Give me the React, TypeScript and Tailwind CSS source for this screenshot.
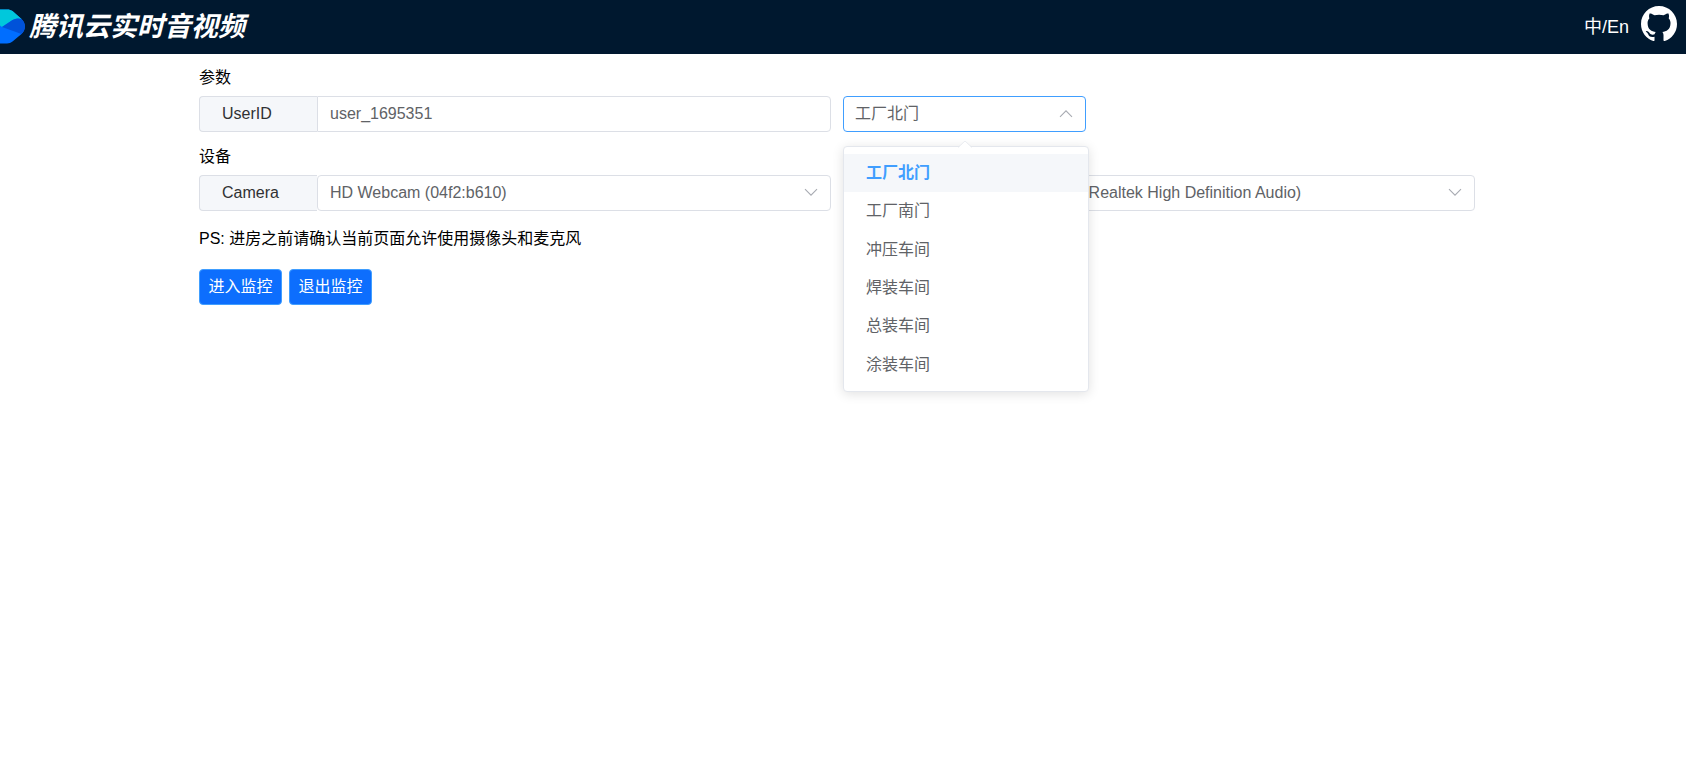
import { useState } from 'react';
import type { ReactNode } from 'react';

const ROOMS = ['工厂北门', '工厂南门', '冲压车间', '焊装车间', '总装车间', '涂装车间'];

function Chevron({ up = false }: { up?: boolean }) {
  return (
    <svg
      viewBox="0 0 14 14"
      className={`pointer-events-none absolute right-[13px] h-[14px] w-[14px] ${up ? 'top-[11px] rotate-180' : 'top-[10px]'}`}
      fill="none"
      stroke="#a8abb2"
      strokeWidth="1.1"
      aria-hidden="true"
    >
      <path d="M1 4.2 7 10.2l6-6" />
    </svg>
  );
}

function Logo() {
  return (
    <svg viewBox="0 0 25 36" className="h-9 w-[25px]" aria-hidden="true">
      <path d="M0 .5h7c2.500 0 4 .6 5.500 1.600l9 7.900c4.500 4 4.500 11 0 15l-9 7.500c-1.500 1.200-3.500 1.900-5.500 1.900H0z" fill="#006eff" />
      <path d="M0 .5h7c2.500 0 4 .6 5.500 1.600L21.500 10C18 8.800 14 9.500 11 12l-9 6-2-1.500z" fill="#00c8dc" />
      <path d="M2 18l9-6c3-2.500 7-3.200 10.500-2 4.500 4 4.500 11 0 15z" fill="#0052d9" />
    </svg>
  );
}

function GithubMark() {
  return (
    <svg viewBox="0 0 16 16" className="h-9 w-9" fill="currentColor" aria-hidden="true">
      <path d="M8 0C3.58 0 0 3.58 0 8c0 3.54 2.29 6.53 5.47 7.59.4.07.55-.17.55-.38 0-.19-.01-.82-.01-1.49-2.01.37-2.53-.49-2.69-.94-.09-.23-.48-.94-.82-1.13-.28-.15-.68-.52-.01-.53.63-.01 1.08.58 1.23.82.72 1.21 1.87.87 2.33.66.07-.52.28-.87.51-1.07-1.78-.2-3.64-.89-3.64-3.95 0-.87.31-1.59.82-2.15-.08-.2-.36-1.02.08-2.12 0 0 .67-.21 2.2.82.64-.18 1.32-.27 2-.27s1.36.09 2 .27c1.53-1.04 2.2-.82 2.2-.82.44 1.1.16 1.92.08 2.12.51.56.82 1.27.82 2.15 0 3.07-1.87 3.75-3.65 3.95.29.25.54.73.54 1.48 0 1.07-.01 1.93-.01 2.2 0 .21.15.46.55.38A8.01 8.01 0 0 0 16 8c0-4.42-3.58-8-8-8z" />
    </svg>
  );
}

type DeviceSelectProps = {
  id: string;
  label: string;
  options: string[];
};

function DeviceSelect({ id, label, options }: DeviceSelectProps) {
  return (
    <div className="flex h-9">
      <label
        htmlFor={id}
        className="flex min-w-[118px] flex-shrink-0 items-center rounded-l border border-r-0 border-[#dcdfe6] bg-[#f5f7fa] px-[22px] text-[#303133]"
      >
        {label}
      </label>
      <div className="relative flex-1">
        <select
          id={id}
          className="h-9 w-full appearance-none rounded border border-[#dcdfe6] bg-white px-3 text-[#606266] outline-none"
        >
          {options.map((option) => (
            <option key={option}>{option}</option>
          ))}
        </select>
        <Chevron />
      </div>
    </div>
  );
}

function ActionButton({ children }: { children: ReactNode }) {
  return (
    <button
      type="button"
      className="h-9 w-[83px] rounded border border-[#409eff] bg-[#0d6efd] text-white"
    >
      {children}
    </button>
  );
}

export default function App() {
  const [userId, setUserId] = useState('user_1695351');
  const [room, setRoom] = useState(ROOMS[0]);
  const [open, setOpen] = useState(true);

  return (
    <div className="min-h-screen bg-white font-['Liberation_Sans','Noto_Sans_CJK_SC',sans-serif] text-base text-black">
      {/* Header */}
      <header className="flex h-[54px] items-center justify-between bg-[#00182f] pr-[9px] text-white">
        <div className="flex items-center gap-1">
          <Logo />
          <h1 className="text-[27px] font-bold italic leading-9">腾讯云实时音视频</h1>
        </div>
        <div className="flex items-center gap-3">
          <button type="button" className="text-lg">
            中/En
          </button>
          <a href="#github" aria-label="GitHub" className="pb-[6px]">
            <GithubMark />
          </a>
        </div>
      </header>

      <main className="mx-auto max-w-[1288px]">
        {/* Params */}
        <h2 className="pb-[6px] pt-3 leading-6">参数</h2>
        <div className="grid grid-cols-2">
          <div className="flex h-9 pr-3">
            <label
              htmlFor="user-id"
              className="flex w-[118px] flex-shrink-0 items-center rounded-l border border-r-0 border-[#dcdfe6] bg-[#f5f7fa] px-[22px] text-[#303133]"
            >
              UserID
            </label>
            <input
              id="user-id"
              value={userId}
              onChange={(e) => setUserId(e.target.value)}
              className="min-w-0 flex-1 rounded-r border border-[#dcdfe6] px-3 text-[#606266] outline-none"
            />
          </div>

          <div className="relative w-[243px]">
            <select
              aria-label="Room"
              value={room}
              onChange={(e) => setRoom(e.target.value)}
              onClick={() => setOpen(!open)}
              className="h-9 w-full appearance-none rounded border border-[#409eff] bg-white px-[11px] text-[#606266] outline-none"
            >
              {ROOMS.map((name) => (
                <option key={name}>{name}</option>
              ))}
            </select>
            <Chevron up={open} />

            {open && (
              <div className="absolute left-0 top-[50px] z-10 w-[246px] rounded border border-[#e4e7ed] bg-white py-[7px] shadow-[0_2px_12px_rgba(0,0,0,0.12)]">
                <svg viewBox="0 0 14 8" className="absolute -top-[6px] left-[114px] h-2 w-[14px]" aria-hidden="true">
                  <path d="M0 7 7 0l7 7v1H0z" fill="#fff" />
                  <path d="M0 6.500 7 0l7 6.500" fill="none" stroke="#e4e7ed" strokeWidth="0.8" />
                </svg>
                <ul className="grid h-[230px] grid-rows-6">
                  {ROOMS.map((name) => (
                    <li key={name}>
                      <button
                        type="button"
                        onClick={() => {
                          setRoom(name);
                          setOpen(false);
                        }}
                        className={`h-full w-full pl-[22px] text-left ${
                          name === room ? 'bg-[#f5f7fa] font-bold text-[#409eff]' : 'text-[#606266]'
                        }`}
                      >
                        {name}
                      </button>
                    </li>
                  ))}
                </ul>
              </div>
            )}
          </div>
        </div>

        {/* Devices */}
        <h2 className="pb-[6px] pt-[13px] leading-6">设备</h2>
        <div className="grid grid-cols-2">
          <div className="pr-3">
            <DeviceSelect id="camera" label="Camera" options={['HD Webcam (04f2:b610)']} />
          </div>
          <div className="pr-3">
            <DeviceSelect
              id="microphone"
              label="Microphone"
              options={['默认 - 麦克风 (Realtek High Definition Audio)']}
            />
          </div>
        </div>

        <p className="pb-[18px] pt-4 leading-6">PS: 进房之前请确认当前页面允许使用摄像头和麦克风</p>

        <div className="flex gap-[7px]">
          <ActionButton>进入监控</ActionButton>
          <ActionButton>退出监控</ActionButton>
        </div>
      </main>
    </div>
  );
}
